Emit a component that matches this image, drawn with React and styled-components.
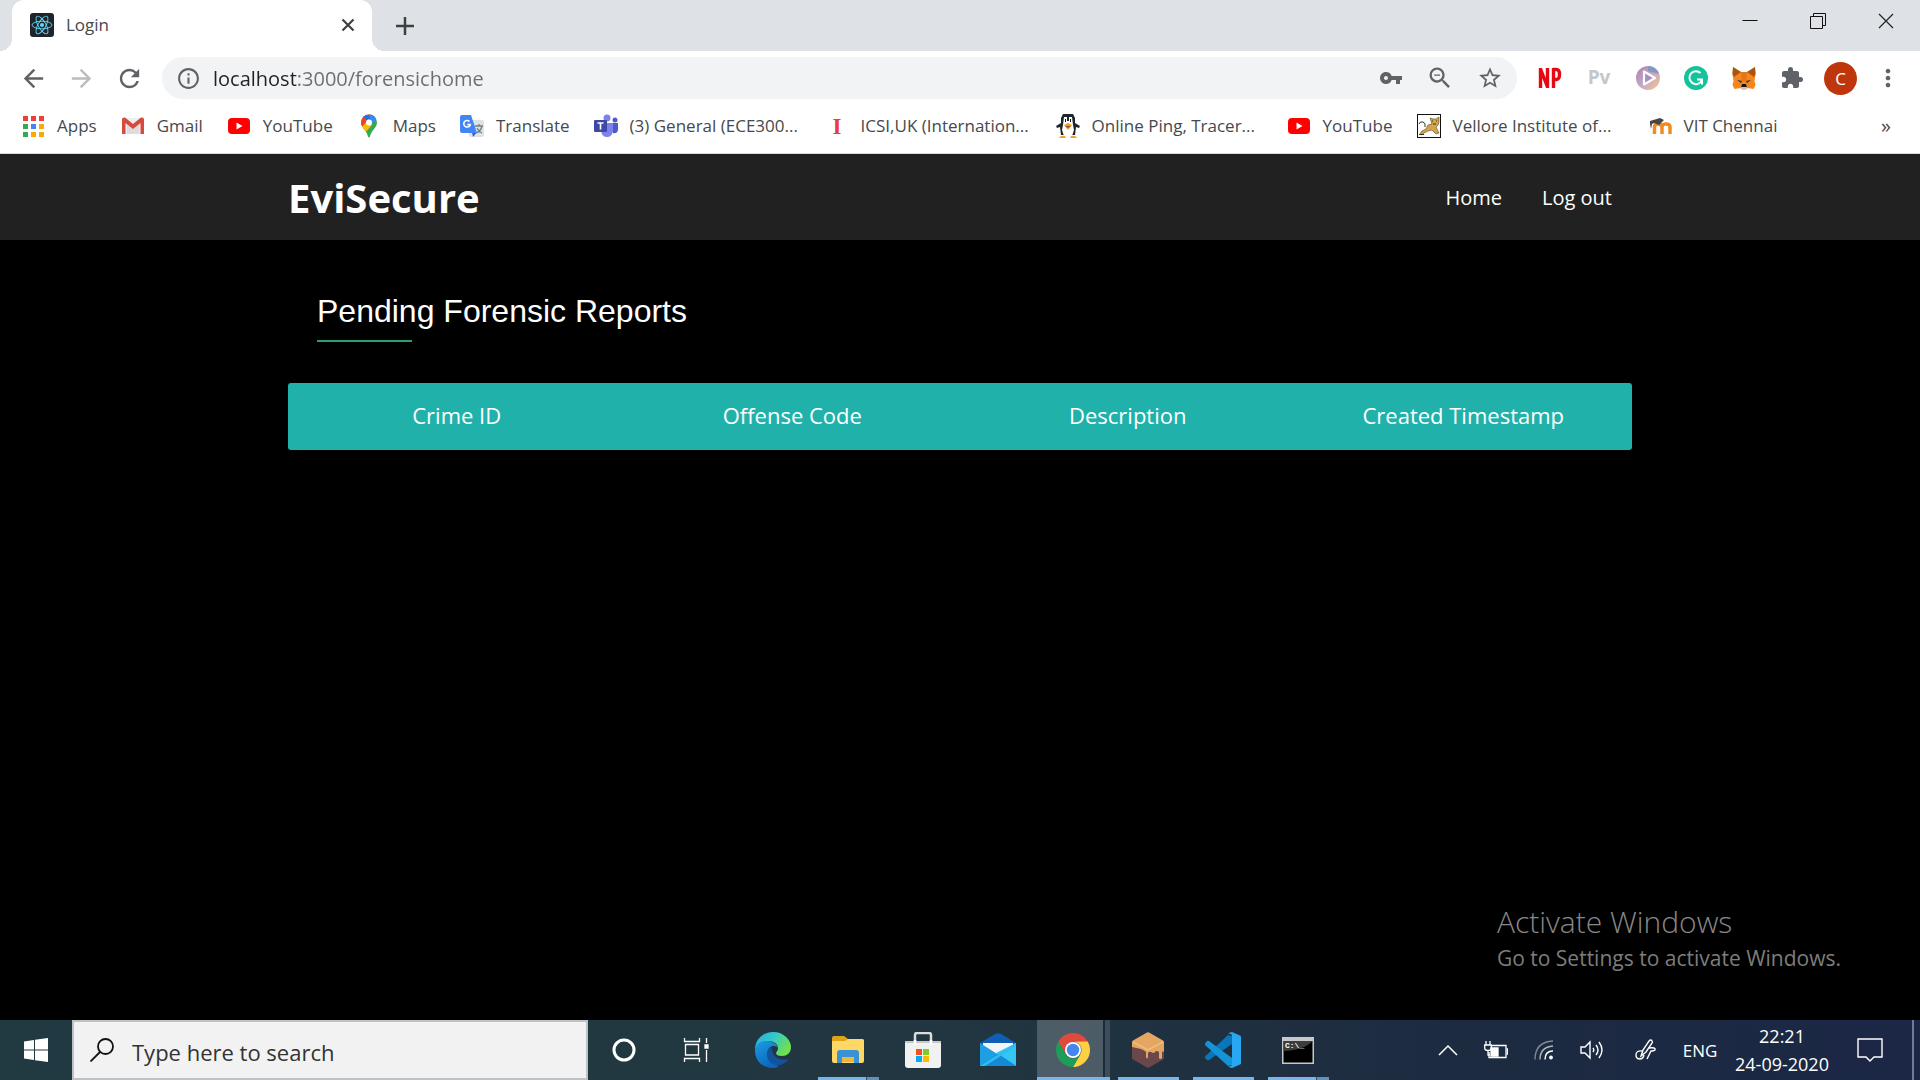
import {
  MdArrowBack,
  MdArrowForward,
  MdExtension,
  MdInfoOutline,
  MdMoreVert,
  MdRefresh,
  MdStarOutline,
  MdVpnKey,
  MdZoomOut,
} from "react-icons/md";
import styled, { createGlobalStyle } from "styled-components";

const GlobalStyle = createGlobalStyle`
  * {
    box-sizing: border-box;
  }

  body {
    margin: 0;
    background-color: #000;
    font-family: "Open Sans", "Noto Sans", sans-serif;
  }

  button {
    border: none;
    padding: 0;
    background: none;
    color: inherit;
    font: inherit;
    display: flex;
    align-items: center;
    justify-content: center;
  }

  a {
    color: inherit;
    text-decoration: none;
  }

  svg {
    display: block;
    flex-shrink: 0;
  }
`;

const Screen = styled.div`
  min-height: 100vh;
  display: flex;
  flex-direction: column;
`;

/* ---------- browser ---------- */

const TabStrip = styled.div`
  height: 51px;
  display: flex;
  background-color: #dee1e6;
`;

const Flare = styled.span`
  width: 12px;
  height: 12px;
  align-self: flex-end;
  background: radial-gradient(
    circle at ${(props) => (props.$side === "left" ? "0 0" : "100% 0")},
    #dee1e6 12px,
    #fff 12px
  );
`;

const Tab = styled.div`
  width: 360px;
  padding: 0 17px 2px 18px;
  display: flex;
  align-items: center;
  gap: 12px;
  border-radius: 12px 12px 0 0;
  background-color: #fff;
  color: #45494d;
  font-size: 17px;
`;

const TabTitle = styled.span`
  flex: 1;
`;

const NewTab = styled.button`
  width: 42px;
`;

const WindowControls = styled.div`
  display: flex;
  margin-left: auto;
`;

const WindowButton = styled.button`
  width: 68px;
  height: 42px;
`;

const Toolbar = styled.div`
  height: 54px;
  padding: 0 18px;
  display: flex;
  align-items: center;
  background-color: #fff;
  color: #5f6368;
`;

const NavButton = styled.button`
  width: 30px;
  height: 42px;
  margin-right: 18px;
  color: ${(props) => (props.disabled ? "#babcbe" : "#5f6368")};
`;

const Omnibox = styled.div`
  flex: 1;
  height: 42px;
  padding: 0 14px;
  display: flex;
  align-items: center;
  gap: 12px;
  border-radius: 21px;
  background-color: #f1f3f4;
`;

const UrlInput = styled.input`
  flex: 1;
  min-width: 0;
  height: 42px;
  padding: 0;
  border: none;
  outline: none;
  color: transparent;
  font: 20px "Open Sans", "Noto Sans", sans-serif;
  background: linear-gradient(to right, #202124 84px, #6a6e72 84px);
  -webkit-background-clip: text;
  background-clip: text;
`;

const OmniboxActions = styled.div`
  display: flex;
  align-items: center;
  gap: 23px;
`;

const Extensions = styled.div`
  padding-left: 21px;
  display: flex;
  align-items: center;
  gap: 24px;
`;

const PvButton = styled.button`
  width: 26px;
  height: 28px;
  padding-bottom: 2px;
  color: #c4c7ca;
  font-size: 19px;
  font-weight: 700;
  line-height: 26px;
`;

const Avatar = styled.button`
  width: 33px;
  height: 33px;
  margin: 0 -7px 0 -4px;
  border-radius: 50%;
  background-color: #bf360c;
  color: #fff;
  font-size: 17px;
`;

const BookmarksBar = styled.nav`
  height: 49px;
  padding: 0 29px 7px 21px;
  display: flex;
  align-items: center;
  gap: 24px;
  border-bottom: 1px solid #d5d7da;
  background-color: #fff;
  color: #45494d;
  font-size: 17px;
  white-space: nowrap;
`;

const Bookmark = styled.a`
  width: ${(props) => (props.$long ? "207px" : "auto")};
  display: flex;
  align-items: center;
  gap: 12px;
`;

const Overflow = styled.button`
  margin-left: auto;
  font-size: 20px;
`;

/* ---------- page ---------- */

const Page = styled.div`
  flex: 1;
  display: flex;
  flex-direction: column;
  background-color: #000;
  color: #fff;
`;

const Header = styled.header`
  height: 86px;
  background-color: #212121;
`;

const Container = styled.div`
  width: 70%;
  margin: 0 auto;
`;

const HeaderInner = styled(Container)`
  height: 86px;
  padding: 2px 20px 0 0;
  display: flex;
  align-items: center;
  justify-content: space-between;
`;

const Logo = styled.h1`
  margin: 0;
  font-size: 40px;
  line-height: 1;
`;

const Menu = styled.nav`
  display: flex;
  gap: 40px;
  padding-bottom: 2px;
  font-size: 20px;
  font-weight: 500;
`;

const Title = styled.h2`
  width: fit-content;
  margin: 48px 0 41px 29px;
  font: 32px/46px "Liberation Sans", Arial, sans-serif;

  &::after {
    content: "";
    display: block;
    width: 95px;
    height: 2px;
    margin-top: 6px;
    background-color: #28a070;
  }
`;

const Table = styled.table`
  width: 100%;
  height: 67px;
  table-layout: fixed;
  border-spacing: 2px;
  border-radius: 3px;
  background-color: #20b2aa;
`;

const HeadCell = styled.th`
  padding: 0 0 4px;
  font-size: 22px;
  font-weight: 400;
`;

const Watermark = styled.div`
  margin: auto 79px 45px auto;
  color: #7d7d7d;
`;

const WatermarkTitle = styled.p`
  margin: 0;
  color: #888;
  font-size: 30px;
  font-weight: 300;
  line-height: 38px;
`;

const WatermarkText = styled.p`
  margin: 0;
  font-size: 21px;
  line-height: 34px;
`;

/* ---------- taskbar ---------- */

const Taskbar = styled.footer`
  height: 60px;
  display: flex;
  background: linear-gradient(to right, #213a42 0%, #213640 50%, #1d2b40 75%, #1b2745 100%);
  color: #fff;
`;

const Start = styled.button`
  width: 72px;
`;

const Search = styled.label`
  width: 516px;
  padding: 0 16px;
  display: flex;
  align-items: center;
  gap: 18px;
  border: 2px solid #c0c1c2;
  background-color: #f2f2f2;
`;

const SearchInput = styled.input`
  flex: 1;
  min-width: 0;
  padding: 4px 0 0;
  border: none;
  outline: none;
  background: none;
  font: 22px "Open Sans", "Noto Sans", sans-serif;

  &::placeholder {
    color: #333;
    opacity: 1;
  }
`;

const SystemButton = styled.button`
  width: 72px;
`;

const Apps = styled.div`
  display: flex;
  margin-left: 3px;
`;

const AppButton = styled.button`
  width: 75px;
  position: relative;
`;

const Underline = styled.span`
  position: absolute;
  left: ${(props) => (props.$active ? "2px" : "8px")};
  right: ${(props) => (props.$active ? "0" : "6px")};
  bottom: 0;
  height: 3px;
  background: ${(props) =>
    props.$stacked
      ? "linear-gradient(to right, #78b5e8 48px, #385166 48px, #385166 49px, #6591b5 49px)"
      : "#78b5e8"};
`;

const Highlight = styled.span`
  position: absolute;
  inset: 0 0 0 2px;
  background: linear-gradient(to right, #ffffff33 66px, #00000022 66px, #00000022 68px, #ffffff22 68px);
`;

const AppIcon = styled.span`
  position: relative;
`;

const Tray = styled.div`
  margin-left: auto;
  display: flex;
  align-items: center;
`;

const TrayButton = styled.button`
  width: ${(props) => (props.$wide ? "60px" : "48px")};
  height: 60px;
  font-size: 17px;
`;

const Clock = styled.button`
  width: 116px;
  height: 60px;
  flex-direction: column;
  font-size: 18px;
  line-height: 28px;
`;

const ShowDesktop = styled.button`
  width: 8px;
  height: 60px;
  margin-left: 12px;
  border-left: 2px solid #717c92;
`;

/* ---------- drawings ---------- */

const ReactIcon = () => (
  <svg width="24" height="24" viewBox="0 0 24 24">
    <rect width="24" height="24" rx="3" fill="#20232a" />
    <g fill="none" stroke="#61dafb" strokeWidth="0.9">
      <ellipse cx="12" cy="12" rx="10" ry="3.8" />
      <ellipse cx="12" cy="12" rx="10" ry="3.8" transform="rotate(60 12 12)" />
      <ellipse cx="12" cy="12" rx="10" ry="3.8" transform="rotate(120 12 12)" />
    </g>
    <circle cx="12" cy="12" r="2" fill="#61dafb" />
  </svg>
);

const AppsIcon = () => {
  const colors = ["#ea4335", "#ea4335", "#ea4335", "#34a853", "#4285f4", "#fbaa05", "#34a853", "#fbaa05", "#fbaa05"];
  return (
    <svg width="24" height="24" viewBox="0 0 24 24">
      {colors.map((color, i) => (
        <rect key={i} x={2 + (i % 3) * 8} y={2 + Math.floor(i / 3) * 8} width="5" height="5" fill={color} />
      ))}
    </svg>
  );
};

const GmailIcon = () => (
  <svg width="24" height="24" viewBox="0 0 24 24">
    <path d="M2 4h20v16H2z" fill="#eceff1" />
    <path d="M6 20V10l6 5 6-5v10z" fill="#dcdcdc" />
    <path d="M1 5.500q0-2 2-2h1l8 6.500 8-6.500h1q2 0 2 2V20h-3.500V9L12 15 4.500 9v11H1z" fill="#d54b3d" />
  </svg>
);

const YouTubeIcon = () => (
  <svg width="24" height="24" viewBox="0 0 24 24">
    <rect x="1" y="4" width="22" height="16" rx="4" fill="#f00" />
    <path d="M9.500 8.500v7l6-3.500z" fill="#fff" />
  </svg>
);

const MapsIcon = () => (
  <svg width="24" height="24" viewBox="0 0 24 24">
    <clipPath id="pin">
      <path d="M12 .500a8 8 0 0 1 8 8c0 5-5.500 7.500-7 14q-1 2-2 0c-1.500-6.500-7-9-7-14a8 8 0 0 1 8-8z" />
    </clipPath>
    <g clipPath="url(#pin)">
      <path d="M0 0h24v24H0z" fill="#34a853" />
      <path d="M0 18L18 0H0z" fill="#ea4335" />
      <path d="M6 2L20 0 12 9z" fill="#1a73e8" />
      <path d="M12 0h9v4l-7 6z" fill="#4285f4" />
      <path d="M4 14L12 5l3 6-8 9z" fill="#fbbc04" />
    </g>
    <circle cx="12" cy="8.500" r="3" fill="#fff" />
  </svg>
);

const TranslateIcon = () => (
  <svg width="24" height="24" viewBox="0 0 24 24">
    <rect x="9" y="6" width="15" height="17" rx="2" fill="#dfe1e4" />
    <path d="M15 12h8m-4-2v2m3 0q-1 5-6 7m1-5q2 4 5 5" stroke="#6b8087" strokeWidth="1.300" fill="none" />
    <path d="M12 18h5l-4 5z" fill="#3356c4" />
    <path d="M2 1h9l6 18H2q-2 0-2-2V3q0-2 2-2z" fill="#4285f4" />
    <path d="M9.500 7.500a3.300 3.300 0 1 0 .8 3H7.200" stroke="#fff" strokeWidth="1.600" fill="none" />
  </svg>
);

const TeamsIcon = () => (
  <svg width="24" height="24" viewBox="0 0 24 24">
    <circle cx="21" cy="6" r="2.500" fill="#5059c9" />
    <path d="M16 9h8v7q-1 4-5 3z" fill="#5059c9" />
    <circle cx="13" cy="4" r="3.500" fill="#7b83eb" />
    <path d="M8 9h11v8q-1 6-6 6t-6-6z" fill="#7b83eb" />
    <rect y="6" width="13" height="12" rx="1" fill="#4048a6" />
    <path d="M3.500 9h6M6.500 9v6.500" stroke="#fff" strokeWidth="1.600" />
  </svg>
);

const LetterIcon = () => (
  <svg width="24" height="24" viewBox="0 0 24 24">
    <text x="12" y="20" textAnchor="middle" fontFamily="Liberation Serif, serif" fontWeight="700" fontSize="23" fill="#e93c46">
      I
    </text>
  </svg>
);

const PenguinIcon = () => (
  <svg width="24" height="24" viewBox="0 0 24 24">
    <path d="M7 0h10l2 4v5l5 3-1 2-3-1-1 8H5l-1-8-3 1-1-2 5-3V4z" fill="#20242b" />
    <path d="M8 3h3v4h2V3h3l1 8 1 5-2 6H8l-2-6 1-5z" fill="#fff" />
    <path d="M9 5h1v3H9zM14 5h1v3h-1z" fill="#111" />
    <path d="M8 11l4-2 4 2-4 5z" fill="#f39b22" />
    <path d="M9 12h6l-3 2z" fill="#a44922" />
    <path d="M3 24q1-3 6-2l1 2zM14 24l1-2q5-1 6 2z" fill="#f5a32a" />
  </svg>
);

const CatIcon = () => (
  <svg width="24" height="24" viewBox="0 0 24 24">
    <rect x="0.500" y="0.500" width="23" height="23" fill="#fff" stroke="#111" />
    <path
      d="M3 20l2-3 4-2 2-4 4-1-2-6 3 1h3l3-2v5l-1 3-2 2 3 6-3 1-4-4-4 1-4 2-3 2z"
      fill="#d3a64a"
      stroke="#5c4521"
      strokeWidth="0.600"
    />
    <path d="M8 13q1-4-2-5-3-1-4 2M2 20.500h5" stroke="#3b311f" fill="none" />
    <path d="M15 7h1M19 7h1M16 10h3" stroke="#3b311f" />
  </svg>
);

const MoodleIcon = () => (
  <svg width="24" height="24" viewBox="0 0 24 24">
    <path d="M6.500 20v-7q0-3 3.500-3t4 3v7m0-7q0-3 4-3t4 3v7" fill="none" stroke="#f28a24" strokeWidth="3.500" />
    <path d="M2 7l10-3 4 2-5 5-5-2-2 1-1 5-1-5z" fill="#464646" />
  </svg>
);

const PlusIcon = () => (
  <svg width="20" height="20" viewBox="0 0 20 20">
    <path d="M10 1v18M1 10h18" stroke="#3c4043" strokeWidth="2.500" />
  </svg>
);

const CloseTabIcon = () => (
  <svg width="14" height="14" viewBox="0 0 14 14">
    <path d="M1.500 1.500l11 11m0-11l-11 11" stroke="#3c4043" strokeWidth="2.200" />
  </svg>
);

const MinimizeIcon = () => (
  <svg width="16" height="16" viewBox="0 0 16 16">
    <path d="M.5 7.500h15" stroke="#111" />
  </svg>
);

const RestoreIcon = () => (
  <svg width="16" height="16" viewBox="0 0 16 16" fill="none" stroke="#111">
    <path d="M.5 3.500h12v12H.5zM3.500 3V.5h12v12H13" />
  </svg>
);

const CloseIcon = () => (
  <svg width="16" height="16" viewBox="0 0 16 16">
    <path d="M1 1l14 14m0-14L1 15" stroke="#222" strokeWidth="1.200" />
  </svg>
);

const NpIcon = () => (
  <svg width="24" height="24" viewBox="0 0 24 24">
    <g fill="none" stroke="#e50914" strokeWidth="3.400">
      <path d="M2.500 22V2M9.500 22V2M2.500 3l7 18M15.500 22V2M15 3.500h3.500q3 0 3 5t-3 5H15" />
    </g>
  </svg>
);

const OrbIcon = () => (
  <svg width="24" height="24" viewBox="0 0 24 24">
    <defs>
      <linearGradient id="orb" x1="0" y1="0" x2="1" y2="1">
        <stop offset="0" stopColor="#b07fae" />
        <stop offset="0.500" stopColor="#c0a8c9" />
        <stop offset="1" stopColor="#ffc48a" />
      </linearGradient>
    </defs>
    <circle cx="12" cy="12" r="12" fill="url(#orb)" />
    <path d="M12 0a12 12 0 0 1 11 8L12 5z" fill="#8796bd" />
    <path d="M8 5.500v13L19 12z" fill="#a98fc1" stroke="#fff" strokeWidth="2.200" strokeLinejoin="round" />
  </svg>
);

const GrammarlyIcon = () => (
  <svg width="24" height="24" viewBox="0 0 24 24">
    <circle cx="12" cy="12" r="12" fill="#15c39a" />
    <path d="M16.500 7a6.500 6.500 0 1 0 1 8M13 13.500h5v5" fill="none" stroke="#fff" strokeWidth="2" />
  </svg>
);

const FoxIcon = () => (
  <svg width="24" height="24" viewBox="0 0 24 24">
    <path d="M1 1l8 5h6l8-5 .5 7-1 7 1 4-2 4-6-1-2 1.500h-3L8.500 22l-6 1-2-4 1-4-1-7z" fill="#f6851b" />
    <path d="M1 1l8 5-7 5-1.500-3zM23 1l-8 5 7 5 1.500-3z" fill="#a85416" />
    <path d="M9 6h6l-1 9h-4z" fill="#e2761b" />
    <path d="M5 14l5 1-1 2zM19 14l-5 1 1 2z" fill="#233447" />
    <path d="M8.500 19h7l-1 4h-5z" fill="#d7c1b3" />
    <path d="M10 18h4l1 3H9z" fill="#161616" />
  </svg>
);

const WindowsIcon = () => (
  <svg width="24" height="24" viewBox="0 0 24 24" fill="#fff">
    <path d="M0 3.500L10 2v9.500H0zM11 1.800L24 0v11.500H11zM0 12.500h10V22L0 20.500zM11 12.500h13V24l-13-1.800z" />
  </svg>
);

const SearchIcon = () => (
  <svg width="24" height="24" viewBox="0 0 24 24" fill="none" stroke="#111" strokeWidth="1.800">
    <circle cx="15.500" cy="8.500" r="7.500" />
    <path d="M10 14L.5 23.500" />
  </svg>
);

const CortanaIcon = () => (
  <svg width="24" height="24" viewBox="0 0 24 24">
    <circle cx="12" cy="12" r="10" fill="none" stroke="#fff" strokeWidth="3" />
  </svg>
);

const TaskViewIcon = () => (
  <svg width="26" height="24" viewBox="0 0 26 24" fill="none" stroke="#fff" strokeWidth="1.300">
    <path d="M1.500 0v3.500h15V0M1.500 24v-3.500h15V24M2.500 6.500h13v10.500h-13zM23.500 0v5M23.500 12v12" />
    <path d="M22 7h3v3h-3z" fill="#fff" />
  </svg>
);

const EdgeIcon = () => (
  <svg width="36" height="36" viewBox="0 0 36 36">
    <defs>
      <linearGradient id="edgeTop" x1="0" y1="0" x2="1" y2="0.500">
        <stop offset="0" stopColor="#2aa9e5" />
        <stop offset="0.500" stopColor="#33c9c8" />
        <stop offset="1" stopColor="#6fe04f" />
      </linearGradient>
      <linearGradient id="edgeLeft" x1="0" y1="0" x2="0.500" y2="1">
        <stop offset="0" stopColor="#1b9de2" />
        <stop offset="1" stopColor="#0c66bd" />
      </linearGradient>
    </defs>
    <path d="M0 18C0 7 8 0 18 0c11 0 18 8 18 15 0 6-4 9-9 9-4 0-6-1-6-3 0-1 2-2 2-5 0-4-4-7-10-7C7 9 2 12 0 18z" fill="url(#edgeTop)" />
    <path d="M0 19C0 12 6 8.500 12 9c7 0 11 4 11 7-2-3-9-3-10 3-1 7 4 13 11 15-3 2-5 2-7 2C7 36 0 28 0 19z" fill="url(#edgeLeft)" />
    <path d="M16 15c-7 4-4 14 2 17 6 3 12 0 16-5-6 2-12 0-15-4-2-3-2-6-3-8z" fill="#12539c" />
  </svg>
);

const FolderIcon = () => (
  <svg width="32" height="28" viewBox="0 0 32 28">
    <path d="M0 2q0-2 2-2h10l4 3H30q2 0 2 2v20H2q-2 0-2-2z" fill="#dfa21b" />
    <path d="M0 5h13l3-2h14q2 0 2 2v20q0 2-2 2H2q-2 0-2-2z" fill="#ffd766" />
    <path d="M5 27V17q0-3 3-3h16q3 0 3 3v10h-5v-6H10v6z" fill="#3893d6" />
    <path d="M9 21h13v5H9z" fill="#eeb83d" />
    <path d="M5 26v-6h5v6zM22 26v-6h5v6z" fill="#3893d6" />
  </svg>
);

const StoreIcon = () => (
  <svg width="36" height="36" viewBox="0 0 36 36">
    <path d="M10 14V3q0-2 2-2h12q2 0 2 2v11" fill="none" stroke="#dcdcdc" strokeWidth="2.500" />
    <path d="M0 9h36v24q0 3-3 3H3q-3 0-3-3z" fill="#f1f1f1" />
    <path d="M0 9h36v2H0z" fill="#c9c9c9" />
    <path d="M10 8v5M26 8v5" stroke="#fff" strokeWidth="2.500" />
    <path d="M11 17h6v6h-6z" fill="#f1511b" />
    <path d="M18 17h6v6h-6z" fill="#80cc28" />
    <path d="M11 24h6v6h-6z" fill="#00adef" />
    <path d="M18 24h6v6h-6z" fill="#fbbc09" />
  </svg>
);

const MailIcon = () => (
  <svg width="36" height="34" viewBox="0 0 36 34">
    <path d="M0 10L15 1q3-1.500 6 0l15 9v8H0z" fill="#0f5db5" />
    <path d="M3 10h30v5l-15 8L3 15z" fill="#f2f5f8" />
    <path d="M36 10v23H0z" fill="#34c6f4" />
    <path d="M36 10L18 21 3 11v4l15 8z" fill="#f2f5f8" />
    <path d="M36 10v23L16 20z" fill="#34c6f4" />
    <path d="M0 10l36 23H0z" fill="#1e9fe3" />
    <path d="M0 33l18-12.500L36 33z" fill="#1589d8" />
    <path d="M0 33L36 10v3L5 33z" fill="#2fbcf0" />
  </svg>
);

const ChromeIcon = () => (
  <svg width="34" height="34" viewBox="0 0 34 34">
    <path d="M2.300 8.500A17 17 0 0 1 31.700 8.500H17L9.600 21.200z" fill="#e04a3c" />
    <path d="M31.700 8.500A17 17 0 0 1 17 34l7.400-12.800A8.500 8.500 0 0 0 17 8.500z" fill="#fdd13f" />
    <path d="M2.300 8.500A17 17 0 0 0 17 34l7.400-12.800A8.500 8.500 0 0 1 9.600 21.200z" fill="#1e9d58" />
    <circle cx="17" cy="17" r="8" fill="#fff" />
    <circle cx="17" cy="17" r="6.200" fill="#4586f0" />
  </svg>
);

const GanacheIcon = () => (
  <svg width="32" height="36" viewBox="0 0 32 36">
    <path d="M0 11l16 8 16-8v15q0 1-1 1.500L17 35.500q-1 .5-2 0L1 27.500Q0 27 0 26z" fill="#69474a" />
    <path d="M0 10q0-1 1-1.500L15 .5q1-.5 2 0l14 8q1 .5 1 1.500v9q-1 2-2 0v7q-2 2-3 0v-6q-3-2-4 0t-4 0q-2-1-3 1v4q-1 3-2 0v-5q-2-2-5-3L0 15z" fill="#e4a663" />
    <path d="M1 10l15 8 15-8" fill="none" stroke="#f2bd7e" strokeWidth="1.500" />
  </svg>
);

const CodeIcon = () => (
  <svg width="36" height="36" viewBox="0 0 36 36">
    <path d="M0 24.500L23 3l4 1v8L4 28q-1 .5-2 0l-2-2z" fill="#0877b9" />
    <path d="M0 11.500L2 9q1-.5 2 0l23 17v7l-4 1L0 13z" fill="#1493d6" />
    <path d="M27 0l8 3.500q1 .5 1 1.500v26q0 1-1 1.500L27 36q-2 0-4-2 4 1 4-2V4q0-3-4-2 2-2 4-2z" fill="#27a8f0" />
  </svg>
);

const TerminalIcon = () => (
  <svg width="32" height="27" viewBox="0 0 32 27">
    <path d="M0 0h32v27H0z" fill="#c6c8ca" />
    <path d="M1.500 4h29v21.500h-29z" fill="#000" />
    <path d="M1.500 4h29q-8 9-29 10z" fill="#3c3c3c" />
    <text x="3" y="11" fontFamily="Liberation Mono, monospace" fontWeight="700" fontSize="8" fill="#fff">
      C:\_
    </text>
  </svg>
);

const ChevronIcon = () => (
  <svg width="20" height="12" viewBox="0 0 20 12">
    <path d="M1 11l9-9 9 9" fill="none" stroke="#fff" strokeWidth="1.500" />
  </svg>
);

const BatteryIcon = () => (
  <svg width="24" height="18" viewBox="0 0 24 18" fill="none" stroke="#fff" strokeWidth="1.300">
    <path d="M8 4.500h14v12H5V11" />
    <path d="M22.500 8h1v5h-1" />
    <path d="M7 7h7v8H7z" fill="#fff" />
    <path d="M2 0v4M6 0v4M.7 4h6.600v3q0 2.500-3.300 2.500T.7 7zM4 10v4h2" />
  </svg>
);

const WifiIcon = () => (
  <svg width="20" height="20" viewBox="0 0 20 20" fill="none" stroke="#fff" strokeWidth="1.400">
    <path d="M1 19.500Q1 2 19 1" opacity="0.450" />
    <path d="M6 19.500Q6 7 19 6" opacity="0.650" />
    <path d="M11 19.500Q11 11 19 11" />
    <circle cx="17" cy="17.500" r="1.200" fill="#fff" />
  </svg>
);

const VolumeIcon = () => (
  <svg width="24" height="20" viewBox="0 0 24 20" fill="none" stroke="#fff" strokeWidth="1.400">
    <path d="M1 7h4l5-5v16l-5-5H1z" />
    <path d="M13 8q1.500 2 0 4M16 5q4 5 0 10M19 2q6 8 0 16" />
  </svg>
);

const PenIcon = () => (
  <svg width="22" height="22" viewBox="0 0 22 22" fill="none" stroke="#fff" strokeWidth="1.400">
    <path d="M6 17l2-6 6-9q2-2 3 0 1 1 0 2l-6 9z" />
    <path d="M8 12q-7-1-7 4 0 4 4 4 3 0 4-4M14 9q7-1 6 2-1 1-4 1l-4 8" />
  </svg>
);

const NoticeIcon = () => (
  <svg width="26" height="26" viewBox="0 0 26 26">
    <path d="M1 2h24v18h-8l-4 4-4-4H1z" fill="none" stroke="#fff" strokeWidth="1.400" />
  </svg>
);

const bookmarks = [
  { label: "Apps", icon: <AppsIcon /> },
  { label: "Gmail", icon: <GmailIcon /> },
  { label: "YouTube", icon: <YouTubeIcon /> },
  { label: "Maps", icon: <MapsIcon /> },
  { label: "Translate", icon: <TranslateIcon /> },
  { label: "(3) General (ECE300...", icon: <TeamsIcon />, long: true },
  { label: "ICSI,UK (Internation...", icon: <LetterIcon />, long: true },
  { label: "Online Ping, Tracer...", icon: <PenguinIcon />, long: true },
  { label: "YouTube", icon: <YouTubeIcon /> },
  { label: "Vellore Institute of...", icon: <CatIcon />, long: true },
  { label: "VIT Chennai", icon: <MoodleIcon /> },
];

const apps = [
  { label: "Edge", icon: <EdgeIcon /> },
  { label: "File Explorer", icon: <FolderIcon />, open: true, stacked: true },
  { label: "Store", icon: <StoreIcon /> },
  { label: "Mail", icon: <MailIcon /> },
  { label: "Chrome", icon: <ChromeIcon />, open: true, active: true },
  { label: "Ganache", icon: <GanacheIcon />, open: true },
  { label: "Code", icon: <CodeIcon />, open: true },
  { label: "Terminal", icon: <TerminalIcon />, open: true, stacked: true },
];

const Browser = () => {
  return (
    <>
      <TabStrip>
        <Flare $side="left" />
        <Tab>
          <ReactIcon />
          <TabTitle>Login</TabTitle>
          <button aria-label="Close tab">
            <CloseTabIcon />
          </button>
        </Tab>
        <Flare $side="right" />
        <NewTab aria-label="New tab">
          <PlusIcon />
        </NewTab>
        <WindowControls>
          <WindowButton aria-label="Minimize"><MinimizeIcon /></WindowButton>
          <WindowButton aria-label="Restore"><RestoreIcon /></WindowButton>
          <WindowButton aria-label="Close"><CloseIcon /></WindowButton>
        </WindowControls>
      </TabStrip>
      <Toolbar>
        <NavButton aria-label="Back"><MdArrowBack size={29} /></NavButton>
        <NavButton aria-label="Forward" disabled><MdArrowForward size={29} /></NavButton>
        <NavButton aria-label="Reload"><MdRefresh size={29} /></NavButton>
        <Omnibox>
          <MdInfoOutline size={25} />
          <UrlInput aria-label="Address" defaultValue="localhost:3000/forensichome" />
          <OmniboxActions>
            <button aria-label="Passwords"><MdVpnKey size={24} /></button>
            <button aria-label="Zoom"><MdZoomOut size={28} /></button>
            <button aria-label="Bookmark"><MdStarOutline size={26} /></button>
          </OmniboxActions>
        </Omnibox>
        <Extensions>
          <button aria-label="NP"><NpIcon /></button>
          <PvButton>Pv</PvButton>
          <button aria-label="Player"><OrbIcon /></button>
          <button aria-label="Grammarly"><GrammarlyIcon /></button>
          <button aria-label="MetaMask"><FoxIcon /></button>
          <button aria-label="Extensions"><MdExtension size={24} /></button>
          <Avatar>C</Avatar>
          <button aria-label="Menu"><MdMoreVert size={28} /></button>
        </Extensions>
      </Toolbar>
      <BookmarksBar>
        {bookmarks.map((item, i) => (
          <Bookmark key={i} href="#" $long={item.long}>
            {item.icon}
            {item.label}
          </Bookmark>
        ))}
        <Overflow>»</Overflow>
      </BookmarksBar>
    </>
  );
};

const ForensicHome = () => {
  return (
    <Page>
      <Header>
        <HeaderInner>
          <Logo>EviSecure</Logo>
          <Menu>
            <a href="#">Home</a>
            <a href="#">Log out</a>
          </Menu>
        </HeaderInner>
      </Header>
      <Container>
        <Title>Pending Forensic Reports</Title>
        <Table>
          <thead>
            <tr>
              <HeadCell>Crime ID</HeadCell>
              <HeadCell>Offense Code</HeadCell>
              <HeadCell>Description</HeadCell>
              <HeadCell>Created Timestamp</HeadCell>
            </tr>
          </thead>
        </Table>
      </Container>
      <Watermark>
        <WatermarkTitle>Activate Windows</WatermarkTitle>
        <WatermarkText>Go to Settings to activate Windows.</WatermarkText>
      </Watermark>
    </Page>
  );
};

const App = () => {
  return (
    <Screen>
      <GlobalStyle />
      <Browser />
      <ForensicHome />
      <Taskbar>
        <Start aria-label="Start"><WindowsIcon /></Start>
        <Search>
          <SearchIcon />
          <SearchInput placeholder="Type here to search" />
        </Search>
        <SystemButton aria-label="Cortana"><CortanaIcon /></SystemButton>
        <SystemButton aria-label="Task view"><TaskViewIcon /></SystemButton>
        <Apps>
          {apps.map((item) => (
            <AppButton key={item.label} aria-label={item.label}>
              {item.active && <Highlight />}
              <AppIcon>{item.icon}</AppIcon>
              {item.open && <Underline $active={item.active} $stacked={item.stacked} />}
            </AppButton>
          ))}
        </Apps>
        <Tray>
          <TrayButton aria-label="Hidden icons"><ChevronIcon /></TrayButton>
          <TrayButton aria-label="Battery"><BatteryIcon /></TrayButton>
          <TrayButton aria-label="Network"><WifiIcon /></TrayButton>
          <TrayButton aria-label="Volume"><VolumeIcon /></TrayButton>
          <TrayButton aria-label="Pen" $wide><PenIcon /></TrayButton>
          <TrayButton>ENG</TrayButton>
          <Clock>
            <span>22:21</span>
            <span>24-09-2020</span>
          </Clock>
          <TrayButton aria-label="Notifications" $wide><NoticeIcon /></TrayButton>
          <ShowDesktop aria-label="Show desktop" />
        </Tray>
      </Taskbar>
    </Screen>
  );
};

export default App;
